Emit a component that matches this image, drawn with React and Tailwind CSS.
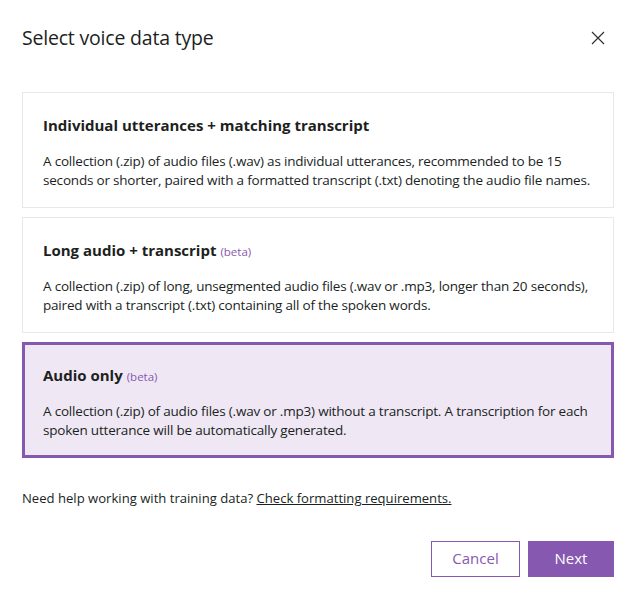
const options = [
	{
		title: "Individual utterances + matching transcript",
		text: "A collection (.zip) of audio files (.wav) as individual utterances, recommended to be 15 seconds or shorter, paired with a formatted transcript (.txt) denoting the audio file names.",
	},
	{
		title: "Long audio + transcript",
		beta: true,
		text: "A collection (.zip) of long, unsegmented audio files (.wav or .mp3, longer than 20 seconds), paired with a transcript (.txt) containing all of the spoken words.",
	},
	{
		title: "Audio only",
		beta: true,
		selected: true,
		text: "A collection (.zip) of audio files (.wav or .mp3) without a transcript. A transcription for each spoken utterance will be automatically generated.",
	},
];

const App = () => {
	return (
		<div className="w-[633px] h-[597px] bg-white text-[#201f1e] font-['Open_Sans',sans-serif] pl-[22px] pr-[19px] pt-[24px]">
			<div className="flex items-center justify-between h-[28px]">
				<h1 className="text-[19.5px] tracking-[-0.2px]">Select voice data type</h1>
				<svg width="14" height="14" viewBox="0 0 14 14" className="mr-[9px] text-[#323130]">
					<path d="M1 1L13 13M13 1L1 13" stroke="currentColor" strokeWidth="1.2" fill="none" />
				</svg>
			</div>
			<div className="mt-[40px] flex flex-col gap-[9px]">
				{options.map(({ title, text, beta, selected }) => (
					<div
						key={title}
						className={selected
							? "h-[116px] border-[3px] border-[#8758b0] bg-[#efe8f4] pl-[18px] pr-[11px] pt-[19px]"
							: "h-[116px] border border-[#e8e8e8] bg-white pl-[20px] pr-[13px] pt-[21px]"}
					>
						<div className="flex items-baseline gap-[4px]">
							<span className="text-[15px] font-bold">{title}</span>
							{beta ? <span className="text-[11.5px] text-[#8758b0]">(beta)</span> : null}
						</div>
						<p className="mt-[15px] text-[13.5px] leading-[19px] tracking-[-0.2px]">{text}</p>
					</div>
				))}
			</div>
			<p className="mt-[31px] text-[13.1px]">
				Need help working with training data? <a className="underline" href="#">Check formatting requirements.</a>
			</p>
			<div className="mt-[32px] flex justify-end gap-[8px]">
				<button className="w-[89px] h-[36px] border border-[#8758b0] text-[#8758b0] text-[15px]">Cancel</button>
				<button className="w-[86px] h-[36px] bg-[#8758b0] text-white text-[15px]">Next</button>
			</div>
		</div>
	);
};

export default App;
